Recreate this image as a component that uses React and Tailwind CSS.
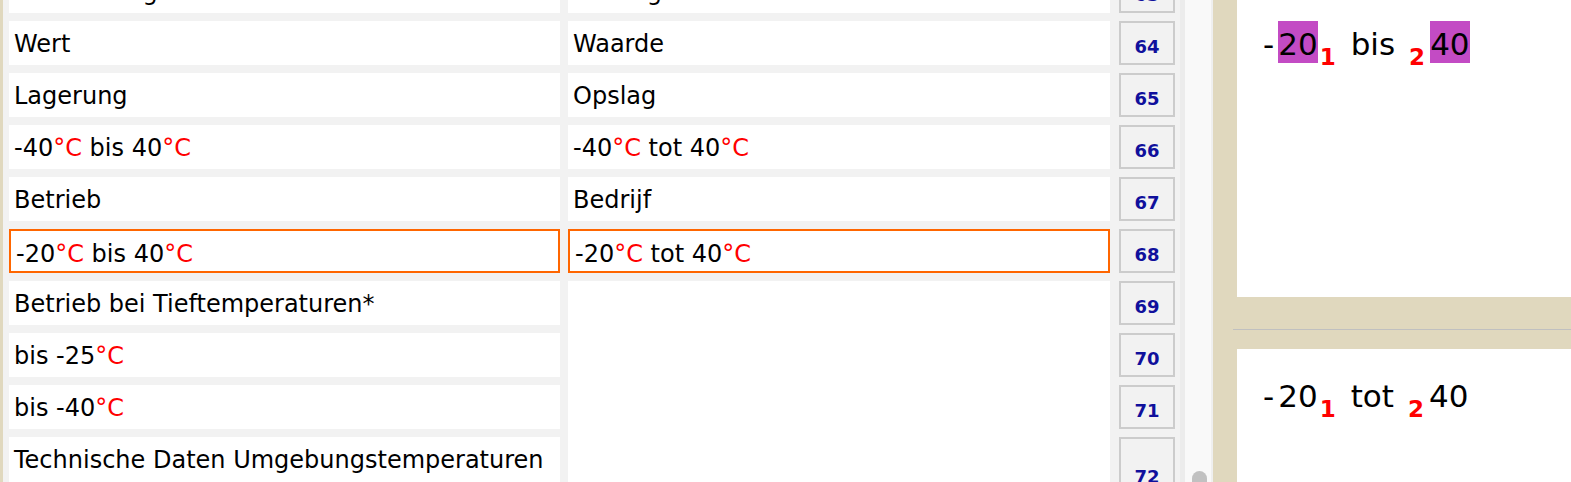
import React from 'react';

const font = { fontFamily: '"DejaVu Sans", Verdana, sans-serif' };

// red degree sign
const Deg = () => <span className="text-[#ff0000]">°C</span>;

const rows = [
  { n: 63, de: 'Luftfeuchtigkeit', nl: 'Vochtigheid' },
  { n: 64, de: 'Wert', nl: 'Waarde' },
  { n: 65, de: 'Lagerung', nl: 'Opslag' },
  { n: 66, de: <>-40<Deg /> bis 40<Deg /></>, nl: <>-40<Deg /> tot 40<Deg /></> },
  { n: 67, de: 'Betrieb', nl: 'Bedrijf' },
  { n: 68, de: <>-20<Deg /> bis 40<Deg /></>, nl: <>-20<Deg /> tot 40<Deg /></>, active: true },
  { n: 69, de: 'Betrieb bei Tieftemperaturen*', nl: null },
  { n: 70, de: <>bis -25<Deg /></>, nl: null },
  { n: 71, de: <>bis -40<Deg /></>, nl: null },
  { n: 72, de: 'Technische Daten Umgebungstemperaturen', nl: null, tall: true },
];

function Row({ row }) {
  const cell = row.active
    ? 'border-2 border-[#ff6600] bg-white pl-[5px] pt-[5px]'
    : 'bg-white pl-[5px] pt-[5px]';
  return (
    <div className={`flex items-start shrink-0 ${row.tall ? 'h-[70px]' : 'h-[52px]'}`}>
      <div className={`w-[551px] whitespace-nowrap ${row.tall ? 'h-[70px]' : 'h-[44px]'} ${cell}`}>
        {row.de}
      </div>
      {row.nl === null ? (
        <div className="ml-[8px] w-[542px] h-full bg-white" />
      ) : (
        <div className={`ml-[8px] w-[542px] h-[44px] whitespace-nowrap ${cell}`}>{row.nl}</div>
      )}
      <div
        className={`ml-[9px] w-[56px] ${row.tall ? 'h-[58px]' : 'h-[44px]'} border-2 border-[#cccccc] bg-[#f2f2f2] flex items-end justify-center pb-[7px] text-[18px] leading-none font-bold text-[#10109c]`}
      >
        {row.n}
      </div>
    </div>
  );
}

function Sub({ children, className = '' }) {
  return (
    <span className={`inline-block text-[23px] font-bold text-[#ff0000] align-[-10px] leading-none ${className}`}>
      {children}
    </span>
  );
}

function Segment({ highlight, children, className = '' }) {
  return (
    <span
      className={`inline-block pt-[5px] pb-[1px] leading-[36px] ${highlight ? 'bg-[#c34bc4]' : ''} ${className}`}
    >
      {children}
    </span>
  );
}

function Preview({ word, highlight, className }) {
  return (
    <div className={`pl-[26px] text-[31px] leading-[36px] text-black whitespace-nowrap ${className}`}>
      <span>-</span>
      <Segment highlight={highlight} className="ml-[4px]">20</Segment>
      <Sub className="ml-[2px]">1</Sub>
      <span className="inline-block ml-[15px]">{word}</span>
      <Sub className="ml-[14px]">2</Sub>
      <Segment highlight={highlight} className="ml-[5px]">40</Segment>
    </div>
  );
}

export default function App() {
  return (
    <div className="flex h-[482px] w-[1571px] overflow-hidden bg-white" style={font}>
      <div className="w-[3px] shrink-0 bg-[#e0d8be]" />

      {/* segment grid */}
      <div className="w-[1177px] shrink-0 bg-[#f2f2f2] overflow-hidden">
        <div className="flex flex-col pl-[6px] mt-[-31px] text-[24px] text-black">
          {rows.map((r) => (
            <Row key={r.n} row={r} />
          ))}
        </div>
      </div>

      {/* scrollbar */}
      <div className="relative w-[33px] shrink-0 bg-[#f9f9f9] border-l-[5px] border-l-[#ececec] border-r-2 border-r-[#efefef]">
        <div className="absolute left-[7px] top-[471px] w-[15px] h-[40px] rounded-full bg-[#c1c1c1]" />
      </div>

      {/* preview panes */}
      <div className="flex-1 flex flex-col bg-[#e0d8be]">
        <div className="ml-[24px] h-[297px] bg-white">
          <Preview word="bis" highlight className="pt-[21px]" />
        </div>
        <div className="h-[52px] flex flex-col justify-start pl-[20px]">
          <div className="mt-[32px] h-px bg-[#c0c0c0]" />
        </div>
        <div className="ml-[24px] flex-1 bg-white">
          <Preview word="tot" className="pt-[24px]" />
        </div>
      </div>
    </div>
  );
}
